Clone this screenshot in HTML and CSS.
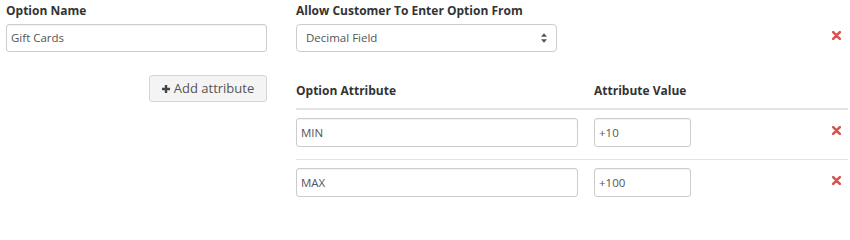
FILE: index.html
```
<!DOCTYPE html>
<html>
<head>
<meta charset="utf-8">
<link rel="stylesheet" href="styles.css">
</head>
<body>
<div class="form">
  <div class="col-left">
    <div class="label">Option Name</div>
    <div class="field">Gift Cards</div>
    <div class="btn-row">
      <div class="btn"><svg class="plus" width="8" height="8" viewBox="0 0 10 10"><path d="M3.5 0h3v3.5H10v3H6.5V10h-3V6.5H0v-3h3.5z" fill="#444"/></svg>Add attribute</div>
    </div>
  </div>
  <div class="col-right">
    <div class="top-row">
      <div class="select-group">
        <div class="label">Allow Customer To Enter Option From</div>
        <div class="select">Decimal Field<svg class="caret" width="6" height="10" viewBox="0 0 7 11"><path d="M3.5 0L7 4H0z M3.5 11L0 7h7z" fill="#555"/></svg></div>
      </div>
      <svg class="remove" width="9" height="9" viewBox="0 0 9 9"><path d="M1.2 1.2L7.8 7.8M7.8 1.2L1.2 7.8" stroke="#d9534f" stroke-width="2.6" stroke-linecap="round"/></svg>
    </div>
    <div class="attrs">
      <div class="attr-head">
        <div class="label">Option Attribute</div>
        <div class="label">Attribute Value</div>
        <div></div>
      </div>
      <div class="attr-row">
        <div class="field tall">MIN</div>
        <div class="field tall">+10</div>
        <svg class="remove" width="9" height="9" viewBox="0 0 9 9"><path d="M1.2 1.2L7.8 7.8M7.8 1.2L1.2 7.8" stroke="#d9534f" stroke-width="2.6" stroke-linecap="round"/></svg>
      </div>
      <div class="attr-row">
        <div class="field tall">MAX</div>
        <div class="field tall">+100</div>
        <svg class="remove" width="9" height="9" viewBox="0 0 9 9"><path d="M1.2 1.2L7.8 7.8M7.8 1.2L1.2 7.8" stroke="#d9534f" stroke-width="2.6" stroke-linecap="round"/></svg>
      </div>
    </div>
  </div>
</div>
</body>
</html>
```

FILE: styles.css
```
html, body {
  margin: 0;
  padding: 0;
  background: #fff;
}
body {
  font-family: "Open Sans", "Liberation Sans", sans-serif;
  color: #333;
  width: 850px;
  height: 205px;
  overflow: hidden;
}
.form {
  display: flex;
  padding: 2px 2px 0 6px;
  gap: 29px;
}
.col-left {
  width: 261px;
  display: flex;
  flex-direction: column;
}
.col-right {
  flex: 1;
  display: flex;
  flex-direction: column;
}
.label {
  font-size: 12px;
  font-weight: 700;
  line-height: 18px;
  color: #333;
  white-space: nowrap;
}
.field {
  box-sizing: border-box;
  height: 28px;
  margin-top: 4px;
  border: 1px solid #ccc;
  border-radius: 3px;
  box-shadow: inset 0 1px 1px rgba(0,0,0,0.06);
  font-size: 11.5px;
  line-height: 26px;
  color: #555;
  padding-left: 4px;
}
.field.tall {
  height: 29px;
  line-height: 27px;
  margin-top: 0;
}
.btn-row {
  display: flex;
  justify-content: flex-end;
  margin-top: 23px;
}
.btn {
  box-sizing: border-box;
  width: 118px;
  height: 27px;
  border: 1px solid #d4d4d4;
  border-radius: 3px;
  background: #f4f4f4;
  font-size: 13px;
  line-height: 25px;
  color: #555;
  display: flex;
  align-items: center;
  justify-content: center;
  gap: 4px;
}
.plus {
  display: block;
}
.top-row {
  display: flex;
  align-items: flex-start;
  justify-content: space-between;
}
.select-group {
  width: 261px;
}
.select {
  box-sizing: border-box;
  height: 28px;
  margin-top: 4px;
  border: 1px solid #ccc;
  border-radius: 4px;
  font-size: 11.5px;
  line-height: 26px;
  color: #555;
  padding: 0 9px 0 9px;
  display: flex;
  align-items: center;
  justify-content: space-between;
}
.top-row .remove {
  margin-top: 29px;
  margin-right: 7px;
}
.attrs {
  margin-top: 30px;
}
.attr-head, .attr-row {
  display: grid;
  grid-template-columns: 282px 97px 1fr;
  column-gap: 16px;
  align-items: center;
}
.attr-head {
  padding-bottom: 8px;
  border-bottom: 2px solid #e3e3e3;
}
.attr-row {
  padding: 8px 0 12px 0;
  border-bottom: 1px solid #e3e3e3;
}
.attr-row:last-child {
  border-bottom: none;
}
.attr-row .remove {
  justify-self: end;
  margin-right: 7px;
  margin-top: -4px;
}
```
